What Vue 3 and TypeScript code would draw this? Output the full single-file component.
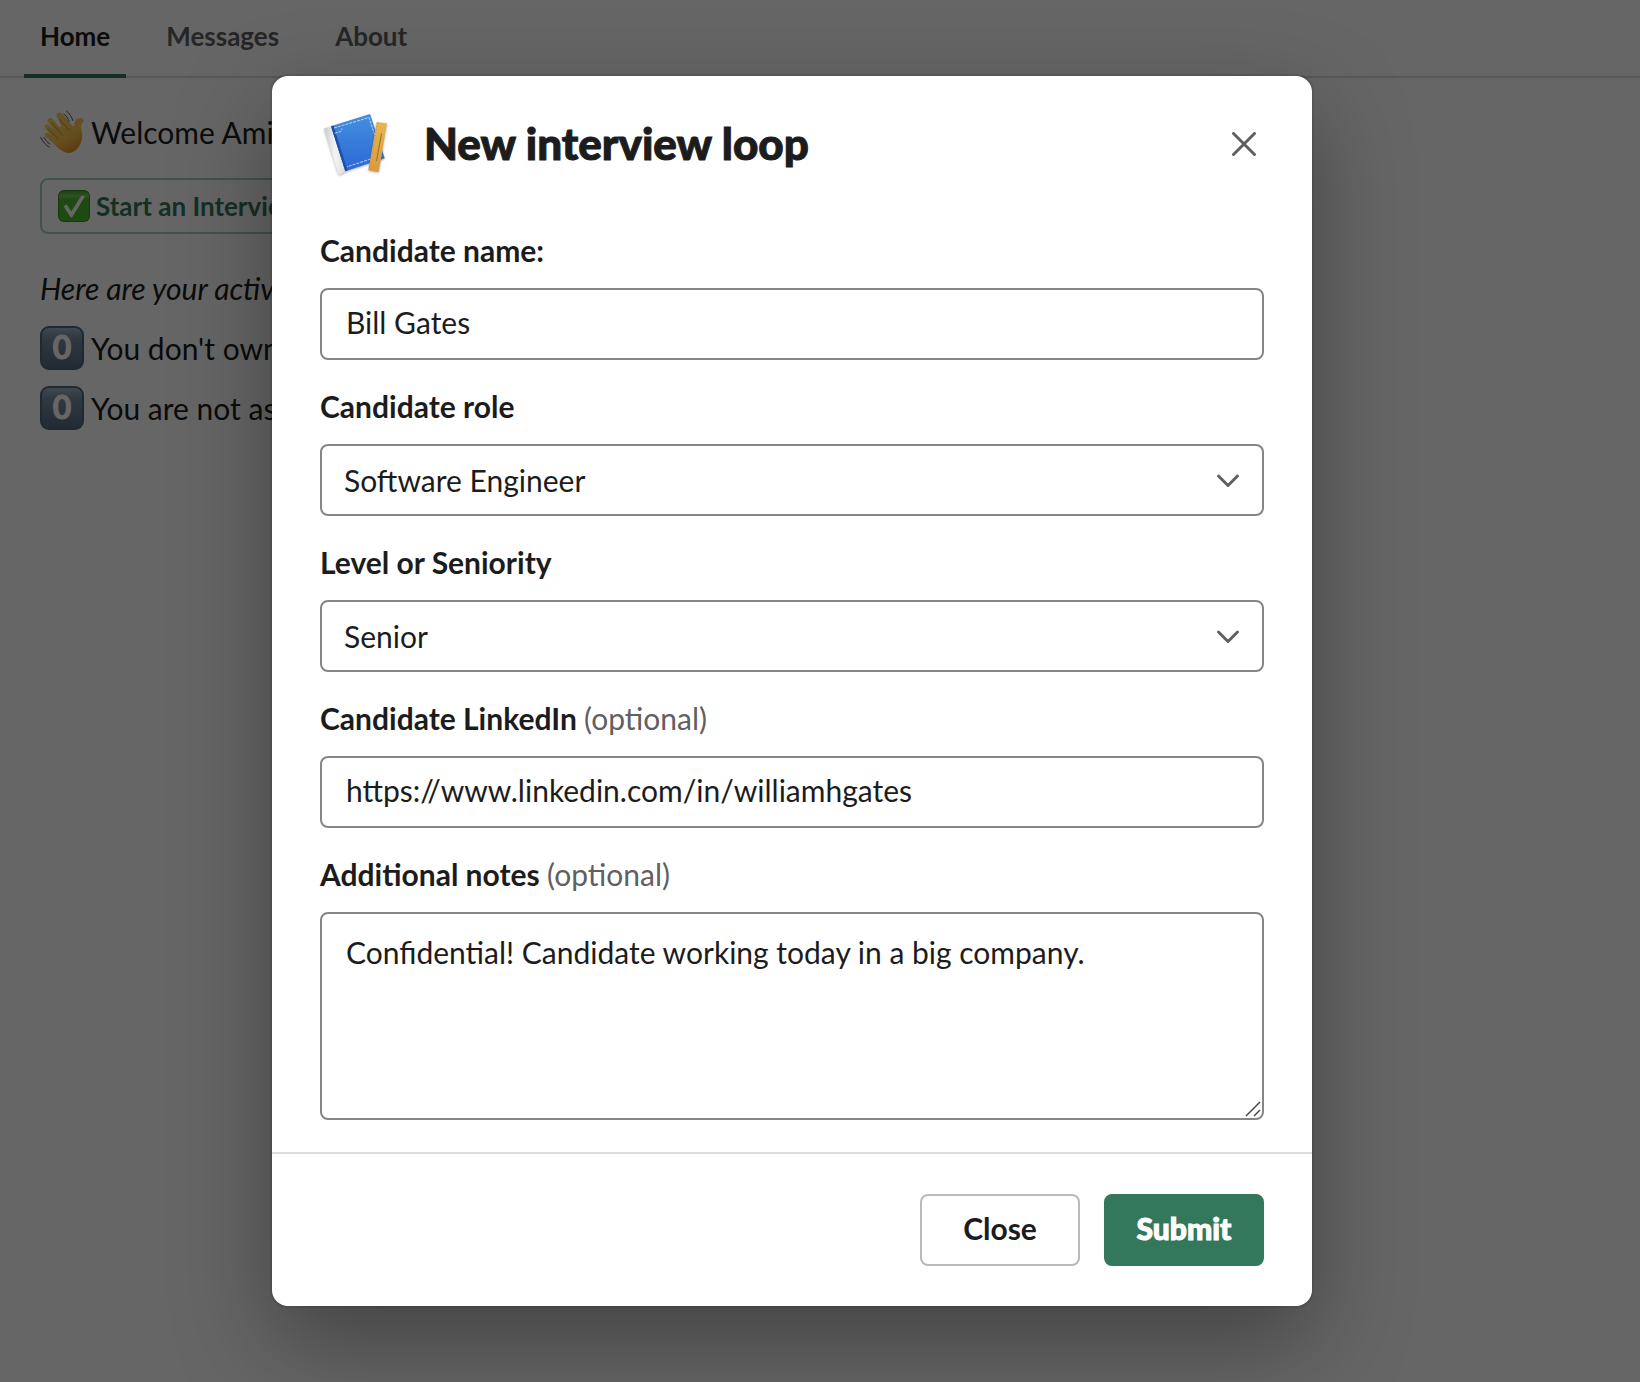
<script setup lang="ts">
import { ref } from 'vue'

const tabs = ['Home', 'Messages', 'About']
const activeTab = ref('Home')

const statusLines = ["You don't own", 'You are not as']

const roles = ['Software Engineer', 'Product Manager', 'Designer']
const levels = ['Junior', 'Senior', 'Staff']

const name = ref('Bill Gates')
const role = ref('Software Engineer')
const level = ref('Senior')
const linkedin = ref('https://www.linkedin.com/in/williamhgates')
const notes = ref('Confidential! Candidate working today in a big company.')
</script>

<template>
  <div class="page">
    <nav class="tabs">
      <a
        v-for="tab in tabs"
        :key="tab"
        href="#"
        class="tab"
        :class="{ active: tab === activeTab }"
        @click.prevent="activeTab = tab"
      >{{ tab }}</a>
    </nav>

    <main class="home">
      <p class="line welcome">
        <svg class="emoji" viewBox="0 0 44 44" aria-hidden="true">
          <defs>
            <linearGradient id="hand" x1="0" y1="0" x2="0.6" y2="1">
              <stop offset="0" stop-color="#ffd764" />
              <stop offset="0.7" stop-color="#fcc44c" />
              <stop offset="1" stop-color="#e59c30" />
            </linearGradient>
          </defs>
          <path
            d="M17.6 3.2c1.4-1.2 3-.9 4.200.4l10.400 11.900c1 1.100 2 .8 2.100-.6.2-2.500.6-4.600 2.800-5.900 2.300-1.200 5.800-.7 6.300 1.300.3 1.400-1.300 2.500-2.100 4.500-.8 2.200.9 6.400.9 11.200 0 5-1.900 9.600-5.200 13.200-3.500 3.800-9.100 4.900-13.900 2.400C18.500 39.300 13.600 33 6.100 27.100c-1.200-1-1.500-2.300-.7-3.300.9-1.200 2.400-1.200 3.800-.2l2.300 1.600-6.200-6.700c-1.100-1.200-1.100-2.700-.1-3.600 1-1 2.500-.9 3.600.2l5.400 5.200-5.900-8c-1-1.400-.8-3 .3-3.900 1.200-.9 2.800-.6 3.900.7l7.200 8.100 1.500-1.300-4.100-8.600c-.8-1.500-.7-3.200.5-4.100z"
            fill="url(#hand)"
          />
          <path
            d="M19 9l10 11M11.500 12.500l11 12.500M8.500 19.500l10 9.500"
            fill="none"
            stroke="#cf8f30"
            stroke-width="1"
            stroke-linecap="round"
          />
          <path
            d="M26.500 1.200c3 2.200 5.200 5.400 6.300 9.300M23.800 4c2.400 1.700 4.200 4.200 5.200 7.200M.8 27.500c1.700 4 4.600 7.400 8.400 9.600M4 27.500c1.300 2.700 3.300 5 6 6.500"
            fill="none"
            stroke="#5a5a5a"
            stroke-width="1"
            stroke-linecap="round"
          />
        </svg>
        <span>Welcome Ami</span>
      </p>

      <button type="button" class="start">
        <svg class="check" viewBox="0 0 32 32" aria-hidden="true">
          <defs>
            <linearGradient id="tick" x1="0" y1="0" x2="0" y2="1">
              <stop offset="0" stop-color="#46a82c" />
              <stop offset="0.16" stop-color="#74cb58" />
              <stop offset="0.3" stop-color="#4db532" />
              <stop offset="1" stop-color="#48bd28" />
            </linearGradient>
          </defs>
          <rect width="32" height="32" rx="6" fill="#378c20" />
          <rect x="1" y="1" width="30" height="30" rx="5" fill="url(#tick)" />
          <path d="M5.500 16.200l3.200-1.700 4.600 7.100L23.500 5.500l3.500.8-12.800 20.900h-1.500z" fill="#fff" />
        </svg>
        <span>Start an Intervie</span>
      </button>

      <p class="line intro">Here are your activ</p>

      <p v-for="line in statusLines" :key="line" class="line">
        <svg class="emoji" viewBox="0 0 44 44" aria-hidden="true">
          <defs>
            <linearGradient id="key" x1="0" y1="0" x2="0" y2="1">
              <stop offset="0" stop-color="#a3b4c4" />
              <stop offset="0.25" stop-color="#788ea3" />
              <stop offset="1" stop-color="#566b80" />
            </linearGradient>
          </defs>
          <rect width="44" height="44" rx="9" fill="#4e6880" />
          <rect x="2" y="2" width="40" height="40" rx="7" fill="url(#key)" />
          <text x="22" y="33" text-anchor="middle" class="digit">0</text>
        </svg>
        <span>{{ line }}</span>
      </p>
    </main>

    <div class="overlay">
      <form class="modal" role="dialog" aria-labelledby="modal-title" @submit.prevent>
        <header class="head">
          <svg class="logo" viewBox="0 0 72 72" aria-hidden="true">
            <defs>
              <linearGradient id="cover" x1="0" y1="0" x2="0" y2="1">
                <stop offset="0" stop-color="#458fdf" />
                <stop offset="1" stop-color="#2b68d6" />
              </linearGradient>
              <linearGradient id="spine" x1="0" y1="0" x2="1" y2="0">
                <stop offset="0" stop-color="#c9c9c9" />
                <stop offset="0.5" stop-color="#f4f4f4" />
                <stop offset="1" stop-color="#dcdcdc" />
              </linearGradient>
              <linearGradient id="wood" x1="0" y1="0" x2="0" y2="1">
                <stop offset="0" stop-color="#e6b552" />
                <stop offset="1" stop-color="#d89a42" />
              </linearGradient>
            </defs>
            <g class="shade">
              <path d="M4 20.500L11 18.300 25.600 63.300 20.500 66.500Q18.500 67 17.800 64.500z" fill="url(#spine)" />
              <path d="M11 18.300L50 6 64.700 50.300 25.300 63.300z" fill="url(#cover)" />
              <path d="M11 18.300L13.500 17.500 27.500 62.500 25.300 63.300z" fill="#1f4fa5" />
              <path
                d="M14 20L49 9.500 61.500 47.500 27 58.800M14.800 25.200l6-1.800 1.200-3"
                fill="none"
                stroke="#b5d3f5"
                stroke-width="1"
                stroke-dasharray="3 1"
              />
            </g>
            <g class="shade">
              <path d="M56.700 14L67 15.300 58.700 64 48.300 62.300z" fill="url(#wood)" />
              <path d="M57.500 15L49.500 61" fill="none" stroke="#c8923a" stroke-width="1" stroke-dasharray="1 2" />
              <path d="M61.500 25.500L56.500 53" fill="none" stroke="#9a6a28" stroke-width="1" />
            </g>
          </svg>
          <h1 id="modal-title">New interview loop</h1>
          <button type="button" class="dismiss" aria-label="Close dialog">
            <svg viewBox="0 0 24 24" aria-hidden="true">
              <path d="M1.500 1.500l21 21M22.500 1.500l-21 21" />
            </svg>
          </button>
        </header>

        <div class="body">
          <div class="field">
            <label for="name">Candidate name:</label>
            <input id="name" v-model="name" type="text" class="control" />
          </div>

          <div class="field">
            <label for="role">Candidate role</label>
            <div class="picker">
              <select id="role" v-model="role" class="control">
                <option v-for="item in roles" :key="item">{{ item }}</option>
              </select>
              <svg class="chevron" viewBox="0 0 24 24" aria-hidden="true">
                <path d="M2.500 8l9.500 9.500L21.500 8" />
              </svg>
            </div>
          </div>

          <div class="field">
            <label for="level">Level or Seniority</label>
            <div class="picker">
              <select id="level" v-model="level" class="control">
                <option v-for="item in levels" :key="item">{{ item }}</option>
              </select>
              <svg class="chevron" viewBox="0 0 24 24" aria-hidden="true">
                <path d="M2.500 8l9.500 9.500L21.500 8" />
              </svg>
            </div>
          </div>

          <div class="field">
            <label for="linkedin">Candidate LinkedIn <span class="optional">(optional)</span></label>
            <input id="linkedin" v-model="linkedin" type="text" class="control" />
          </div>

          <div class="field">
            <label for="notes">Additional notes <span class="optional">(optional)</span></label>
            <div class="picker">
              <textarea id="notes" v-model="notes" class="control"></textarea>
              <svg class="grip" viewBox="0 0 16 16" aria-hidden="true">
                <path d="M1 15L15 1M9 15l6-6" />
              </svg>
            </div>
          </div>
        </div>

        <footer class="foot">
          <button type="button" class="action">Close</button>
          <button type="submit" class="action primary">Submit</button>
        </footer>
      </form>
    </div>
  </div>
</template>

<style>
body {
  margin: 0;
}
</style>

<style scoped>
.page {
  position: relative;
  min-height: 100vh;
  overflow: hidden;
  background: #fff;
  color: #1d1c1d;
  font-family: Lato, "Open Sans", sans-serif;
  font-size: 30px;
  line-height: 44px;
}

.page * {
  box-sizing: border-box;
}

button,
input,
select,
textarea {
  margin: 0;
  color: inherit;
  font: inherit;
}

.tabs {
  display: flex;
  gap: 24px;
  height: 78px;
  padding: 0 24px;
  border-bottom: 2px solid #dddddd;
}

.tab {
  height: 78px;
  padding: 0 16px;
  border-bottom: 4px solid transparent;
  color: #616061;
  font-size: 26px;
  font-weight: 700;
  line-height: 72px;
  text-decoration: none;
}

.tab.active {
  border-color: #34785c;
  color: #1d1c1d;
}

.home {
  padding: 32px 40px;
}

.line {
  display: flex;
  align-items: center;
  gap: 7px;
  margin: 0 0 16px;
  white-space: nowrap;
}

.welcome {
  margin-bottom: 24px;
}

.intro {
  font-style: italic;
}

.emoji {
  flex: none;
  width: 44px;
  height: 44px;
}

.digit {
  fill: #fff;
  stroke: #fff;
  stroke-width: 1px;
  font-family: Lato, sans-serif;
  font-size: 32px;
  font-weight: 700;
}

.start {
  display: flex;
  align-items: center;
  gap: 6px;
  height: 56px;
  margin-bottom: 32px;
  padding: 0 16px;
  border: 2px solid #a3cdbd;
  border-radius: 8px;
  background: none;
  color: #34785c;
  font-size: 26px;
  font-weight: 700;
  white-space: nowrap;
}

.check {
  width: 32px;
  height: 32px;
}

.overlay {
  position: absolute;
  inset: 0;
  display: flex;
  align-items: center;
  justify-content: center;
  padding: 0 56px 0 0;
  background: rgba(0, 0, 0, 0.6);
}

.modal {
  width: 100%;
  max-width: 1040px;
  border-radius: 16px;
  background: #fff;
  box-shadow: 0 0 0 2px rgba(29, 28, 29, 0.13), 0 36px 96px rgba(0, 0, 0, 0.35);
}

.head {
  display: flex;
  align-items: center;
  height: 136px;
  padding: 0 48px;
}

.logo {
  flex: none;
  width: 72px;
  height: 72px;
  margin-right: 32px;
}

.shade {
  filter: drop-shadow(0 1px 1px rgba(0, 0, 0, 0.3));
}

h1 {
  flex: 1;
  margin: 0;
  padding-bottom: 2px;
  font-size: 44px;
  font-weight: 900;
  line-height: 60px;
  -webkit-text-stroke: 1px currentColor;
}

.dismiss {
  display: flex;
  align-items: center;
  justify-content: center;
  width: 40px;
  height: 40px;
  padding: 0;
  border: 0;
  background: none;
}

.dismiss svg {
  width: 24px;
  height: 24px;
}

.dismiss path,
.chevron path {
  fill: none;
  stroke: #616061;
  stroke-width: 3;
  stroke-linecap: round;
  stroke-linejoin: round;
}

.body {
  display: flex;
  flex-direction: column;
  gap: 24px;
  padding: 16px 48px 32px;
}

label {
  display: block;
  margin-bottom: 16px;
  font-weight: 700;
}

.optional {
  color: #616061;
  font-weight: 400;
}

.control {
  display: block;
  width: 100%;
  height: 72px;
  padding: 0 24px 4px;
  border: 2px solid #868686;
  border-radius: 8px;
  outline: none;
  background: #fff;
}

.picker {
  position: relative;
}

select.control {
  padding: 0 64px 0 22px;
  appearance: none;
}

textarea.control {
  height: 208px;
  padding: 16px 24px;
  resize: none;
}

.chevron {
  position: absolute;
  top: 24px;
  right: 24px;
  width: 24px;
  height: 24px;
  pointer-events: none;
}

.grip {
  position: absolute;
  right: 3px;
  bottom: 3px;
  width: 16px;
  height: 16px;
  pointer-events: none;
}

.grip path {
  fill: none;
  stroke: #4a4a4a;
  stroke-width: 1.5;
}

.foot {
  display: flex;
  justify-content: flex-end;
  gap: 24px;
  padding: 40px 48px;
  border-top: 2px solid #dddddd;
}

.action {
  width: 160px;
  height: 72px;
  padding: 0 0 4px;
  border: 2px solid #bbbabb;
  border-radius: 8px;
  background: #fff;
  font-weight: 700;
}

.action.primary {
  border-color: #34785c;
  background: #34785c;
  color: #fff;
  font-weight: 900;
  -webkit-text-stroke: 1px currentColor;
}
</style>
